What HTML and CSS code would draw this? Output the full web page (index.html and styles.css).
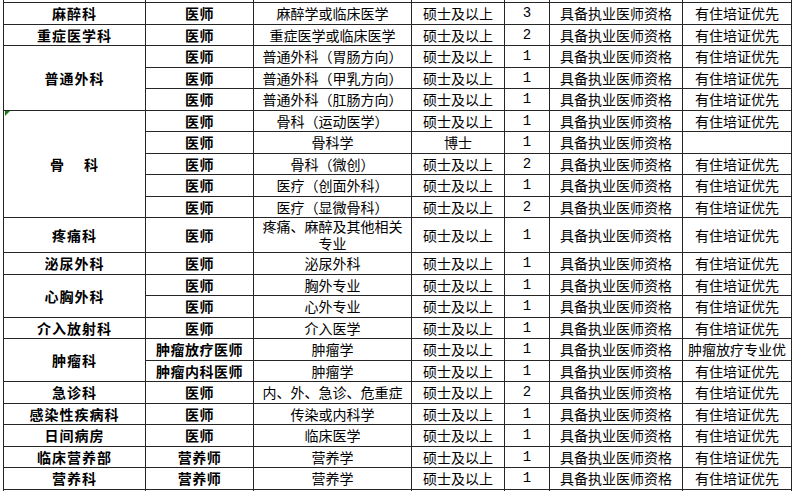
FILE: index.html
```html
<!DOCTYPE html>
<html lang="zh">
<head>
<meta charset="utf-8">
<link rel="stylesheet" href="styles.css">
</head>
<body>
<div class="sheet">
<table class="grid">
<colgroup>
<col class="w1"><col class="w2"><col class="w3"><col class="w4"><col class="w5"><col class="w6"><col class="w7">
</colgroup>
<tr class="edge"><td></td><td></td><td></td><td></td><td></td><td></td><td></td></tr>
<tr><td class="dept">麻醉科</td><td class="post">医师</td><td>麻醉学或临床医学</td><td>硕士及以上</td><td class="num">3</td><td>具备执业医师资格</td><td>有住培证优先</td></tr>
<tr><td class="dept">重症医学科</td><td class="post">医师</td><td>重症医学或临床医学</td><td>硕士及以上</td><td class="num">2</td><td>具备执业医师资格</td><td>有住培证优先</td></tr>
<tr><td class="dept" rowspan="3">普通外科</td><td class="post">医师</td><td>普通外科（胃肠方向）</td><td>硕士及以上</td><td class="num">1</td><td>具备执业医师资格</td><td>有住培证优先</td></tr>
<tr><td class="post">医师</td><td>普通外科（甲乳方向）</td><td>硕士及以上</td><td class="num">1</td><td>具备执业医师资格</td><td>有住培证优先</td></tr>
<tr><td class="post">医师</td><td>普通外科（肛肠方向）</td><td>硕士及以上</td><td class="num">1</td><td>具备执业医师资格</td><td>有住培证优先</td></tr>
<tr><td class="dept flagged" rowspan="5"><span class="flag"></span>骨　 科</td><td class="post">医师</td><td>骨科（运动医学）</td><td>硕士及以上</td><td class="num">1</td><td>具备执业医师资格</td><td>有住培证优先</td></tr>
<tr><td class="post">医师</td><td>骨科学</td><td>博士</td><td class="num">1</td><td>具备执业医师资格</td><td></td></tr>
<tr><td class="post">医师</td><td>骨科（微创）</td><td>硕士及以上</td><td class="num">2</td><td>具备执业医师资格</td><td>有住培证优先</td></tr>
<tr><td class="post">医师</td><td>医疗（创面外科）</td><td>硕士及以上</td><td class="num">1</td><td>具备执业医师资格</td><td>有住培证优先</td></tr>
<tr><td class="post">医师</td><td>医疗（显微骨科）</td><td>硕士及以上</td><td class="num">2</td><td>具备执业医师资格</td><td>有住培证优先</td></tr>
<tr class="tall"><td class="dept">疼痛科</td><td class="post">医师</td><td class="wrap">疼痛、麻醉及其他相关<br>专业</td><td>硕士及以上</td><td class="num">1</td><td>具备执业医师资格</td><td>有住培证优先</td></tr>
<tr><td class="dept">泌尿外科</td><td class="post">医师</td><td>泌尿外科</td><td>硕士及以上</td><td class="num">1</td><td>具备执业医师资格</td><td>有住培证优先</td></tr>
<tr><td class="dept" rowspan="2">心胸外科</td><td class="post">医师</td><td>胸外专业</td><td>硕士及以上</td><td class="num">1</td><td>具备执业医师资格</td><td>有住培证优先</td></tr>
<tr><td class="post">医师</td><td>心外专业</td><td>硕士及以上</td><td class="num">1</td><td>具备执业医师资格</td><td>有住培证优先</td></tr>
<tr><td class="dept">介入放射科</td><td class="post">医师</td><td>介入医学</td><td>硕士及以上</td><td class="num">1</td><td>具备执业医师资格</td><td>有住培证优先</td></tr>
<tr><td class="dept" rowspan="2">肿瘤科</td><td class="post">肿瘤放疗医师</td><td>肿瘤学</td><td>硕士及以上</td><td class="num">1</td><td>具备执业医师资格</td><td>肿瘤放疗专业优</td></tr>
<tr><td class="post">肿瘤内科医师</td><td>肿瘤学</td><td>硕士及以上</td><td class="num">1</td><td>具备执业医师资格</td><td>有住培证优先</td></tr>
<tr><td class="dept">急诊科</td><td class="post">医师</td><td>内、外、急诊、危重症</td><td>硕士及以上</td><td class="num">2</td><td>具备执业医师资格</td><td>有住培证优先</td></tr>
<tr><td class="dept">感染性疾病科</td><td class="post">医师</td><td>传染或内科学</td><td>硕士及以上</td><td class="num">1</td><td>具备执业医师资格</td><td>有住培证优先</td></tr>
<tr><td class="dept">日间病房</td><td class="post">医师</td><td>临床医学</td><td>硕士及以上</td><td class="num">1</td><td>具备执业医师资格</td><td>有住培证优先</td></tr>
<tr><td class="dept">临床营养部</td><td class="post">营养师</td><td>营养学</td><td>硕士及以上</td><td class="num">1</td><td>具备执业医师资格</td><td>有住培证优先</td></tr>
<tr><td class="dept">营养科</td><td class="post">营养师</td><td>营养学</td><td>硕士及以上</td><td class="num">1</td><td>具备执业医师资格</td><td>有住培证优先</td></tr>
<tr class="edgeb"><td></td><td></td><td></td><td></td><td></td><td></td><td></td></tr>
</table>
</div>
</body>
</html>
```

FILE: styles.css
```css
html, body {
  margin: 0;
  padding: 0;
  background: #ffffff;
  overflow: hidden;
}

.sheet {
  width: 800px;
  height: 491px;
  overflow: hidden;
  padding-left: 3px;
  box-sizing: border-box;
}

.grid {
  border-collapse: collapse;
  table-layout: fixed;
  width: 789px;
  font-family: "Noto Sans CJK SC", "Noto Sans", sans-serif;
  font-size: 14px;
  color: #000;
}

.w1 { width: 142px; }
.w2 { width: 108px; }
.w3 { width: 158px; }
.w4 { width: 93px; }
.w5 { width: 45px; }
.w6 { width: 133px; }
.w7 { width: 109px; }

.grid td {
  border: 1px solid #262626;
  height: 20.5px;
  padding: 0;
  text-align: center;
  vertical-align: middle;
  line-height: 16px;
  white-space: nowrap;
  overflow: hidden;
}

.grid tr.edge td {
  height: 2px;
  border-top: none;
}

.grid tr.edgeb td {
  height: 4px;
  border-bottom: none;
}

.grid tr.tall td {
  height: 34px;
}

.grid td.wrap {
  line-height: 17px;
}

.grid td.dept {
  font-weight: 700;
  letter-spacing: 1px;
}

.grid td.post {
  font-weight: 700;
  letter-spacing: 0.5px;
}

.grid td.num {
  font-family: "Liberation Mono", monospace;
  font-size: 14px;
}

.grid td.flagged {
  position: relative;
}

.flag {
  position: absolute;
  left: 1px;
  top: 0;
  width: 0;
  height: 0;
  border-top: 5px solid #1d7a1d;
  border-right: 5px solid transparent;
}
```
